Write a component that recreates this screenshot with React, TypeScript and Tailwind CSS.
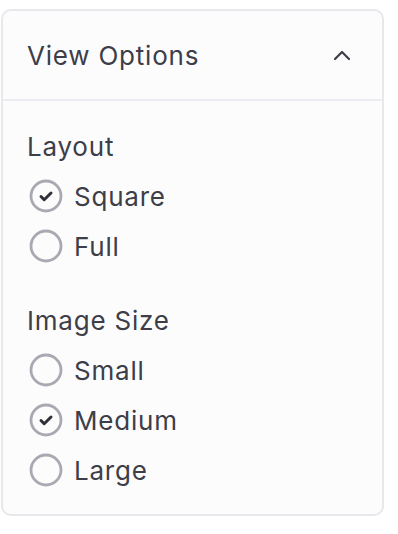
import React from "react";

type Option = { label: string; checked: boolean };

function Radio({ checked }: { checked: boolean }) {
  return (
    <svg width="34" height="34" viewBox="0 0 34 34" className="shrink-0">
      <circle cx="17" cy="17" r="15" fill="none" stroke="#a9a9b2" strokeWidth="2.8" />
      {checked && (
        <path
          d="M12 17.5 L15.2 20.7 L22 14"
          fill="none"
          stroke="#2f3038"
          strokeWidth="3"
          strokeLinecap="round"
          strokeLinejoin="round"
        />
      )}
    </svg>
  );
}

function Section({ title, options }: { title: string; options: Option[] }) {
  return (
    <div className="flex flex-col">
      <div className="h-[50px] flex items-center text-[26px] tracking-[0.03em] text-[#3d3e48]">{title}</div>
      {options.map((o) => (
        <div key={o.label} className="h-[50px] flex items-center gap-[11px] pl-[2px]">
          <Radio checked={o.checked} />
          <span className="text-[26px] tracking-[0.03em] text-[#3d3e48]">{o.label}</span>
        </div>
      ))}
    </div>
  );
}

export default function App() {
  return (
    <div className="w-[398px] h-[534px] bg-white pt-[9px] pl-[1px]" style={{ fontFamily: "Inter, 'Liberation Sans', sans-serif" }}>
      <div className="w-[383px] border-2 border-[#e8e8ec] rounded-[10px] bg-[#fcfcfd] overflow-hidden">
        {/* header */}
        <div className="h-[90px] flex items-center justify-between pl-[24px] pr-[28px] border-b-2 border-[#ececf0]">
          <span className="text-[26px] tracking-[0.03em] text-[#3d3e48]">View Options</span>
          <svg width="24" height="24" viewBox="0 0 24 24" fill="none" stroke="#3d3e48" strokeWidth="2.2" strokeLinecap="round" strokeLinejoin="round">
            <path d="M5 16 L12 9 L19 16" />
          </svg>
        </div>
        {/* body */}
        <div className="flex flex-col gap-[24px] pl-[24px] pt-[20px] pb-[19px]">
          <Section
            title="Layout"
            options={[
              { label: "Square", checked: true },
              { label: "Full", checked: false },
            ]}
          />
          <Section
            title="Image Size"
            options={[
              { label: "Small", checked: false },
              { label: "Medium", checked: true },
              { label: "Large", checked: false },
            ]}
          />
        </div>
      </div>
    </div>
  );
}
